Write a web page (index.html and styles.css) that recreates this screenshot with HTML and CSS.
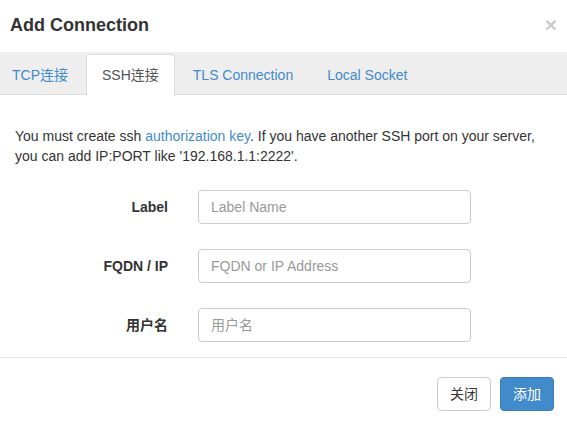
FILE: index.html
```html
<!DOCTYPE html>
<html>
<head>
<meta charset="utf-8">
<link rel="stylesheet" href="styles.css">
</head>
<body>
<div class="modal">
  <div class="modal-header">
    <h4 class="modal-title">Add Connection</h4>
    <span class="close">&times;</span>
  </div>
  <div class="tabs">
    <a class="tab">TCP连接</a>
    <a class="tab active">SSH连接</a>
    <a class="tab">TLS Connection</a>
    <a class="tab">Local Socket</a>
  </div>
  <div class="modal-body">
    <p class="intro">You must create ssh <a class="link">authorization key</a>. If you have another SSH port on your server, you can add IP:PORT like '192.168.1.1:2222'.</p>
    <div class="form">
      <label class="form-label">Label</label>
      <div class="input placeholder">Label Name</div>
      <label class="form-label">FQDN / IP</label>
      <div class="input placeholder">FQDN or IP Address</div>
      <label class="form-label">用户名</label>
      <div class="input placeholder">用户名</div>
    </div>
  </div>
  <div class="modal-footer">
    <button class="btn btn-default">关闭</button>
    <button class="btn btn-primary">添加</button>
  </div>
</div>
</body>
</html>
```
FILE: styles.css
```css
* { box-sizing: border-box; }
html, body { margin: 0; padding: 0; background: #fff; }
body {
  font-family: "Liberation Sans", "Noto Sans CJK SC", sans-serif;
  font-size: 14px;
  line-height: 20px;
  color: #333;
}
.modal { width: 567px; }
.modal-header {
  display: flex;
  justify-content: space-between;
  align-items: flex-start;
  padding: 15px 10px 17px 10px;
}
.modal-title {
  margin: 0;
  font-size: 18px;
  font-weight: bold;
  line-height: 20px;
  color: #333;
}
.close {
  font-size: 21px;
  font-weight: bold;
  line-height: 16px;
  color: #000;
  opacity: 0.2;
  margin-top: 2px;
}
.tabs {
  display: flex;
  gap: 2px;
  background: #eee;
  border-bottom: 1px solid #ddd;
  padding-top: 2px;
  padding-left: 0;
  margin-left: -4px;
  height: 43px;
}
.tab {
  display: block;
  padding: 10px 15px;
  line-height: 20px;
  border: 1px solid transparent;
  border-bottom: none;
  border-radius: 4px 4px 0 0;
  color: #428bca;
  height: 42px;
}
.tab.active {
  background: #fff;
  border-color: #ddd;
  color: #555;
}
.modal-body {
  padding: 31px 15px 15px 15px;
}
.intro { margin: 0 0 24px 0; }
.link { color: #428bca; }
.form {
  display: grid;
  grid-template-columns: 153px 273px;
  column-gap: 30px;
  row-gap: 25px;
}
.form-label {
  font-weight: bold;
  text-align: right;
  line-height: 34px;
}
.input {
  height: 34px;
  padding: 6px 12px;
  border: 1px solid #ccc;
  border-radius: 4px;
  line-height: 20px;
}
.placeholder { color: #999; }
.modal-footer {
  display: flex;
  justify-content: flex-end;
  gap: 9px;
  border-top: 1px solid #e5e5e5;
  padding: 19px 13px 15px 15px;
}
.btn {
  font-family: "Liberation Sans", "Noto Sans CJK SC", sans-serif;
  font-size: 14px;
  line-height: 20px;
  padding: 6px 12px;
  border: 1px solid #ccc;
  border-radius: 4px;
  background: #fff;
  color: #333;
  height: 34px;
}
.btn-primary {
  background: #428bca;
  border-color: #357ebd;
  color: #fff;
}
```
